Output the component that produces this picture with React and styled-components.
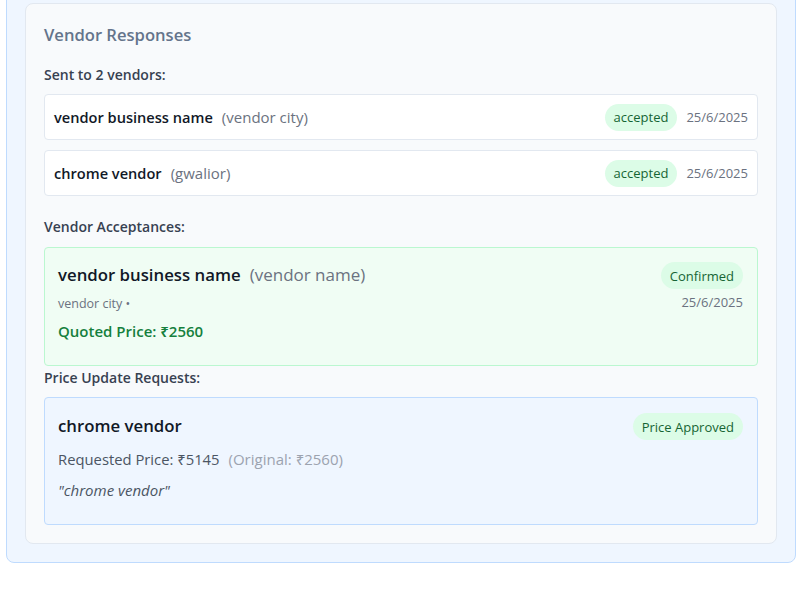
import React from "react";
import styled, { createGlobalStyle } from "styled-components";

const Global = createGlobalStyle`
  html, body { margin: 0; padding: 0; background: #ffffff; }
  body { font-family: "Open Sans", "Noto Sans", sans-serif; overflow: hidden; }
  * { box-sizing: border-box; }
`;

const Page = styled.div`
  padding: 0 12px 0 6px;
`;

const Outer = styled.div`
  margin-top: -16px;
  background: #eff6ff;
  border: 1px solid #bfdbfe;
  border-radius: 8px;
  padding: 18px;
`;

const Card = styled.section`
  background: #f8fafc;
  border: 1px solid #e2e8f0;
  border-radius: 8px;
  padding: 17px 18px 18px 18px;
`;

const Title = styled.h3`
  margin: 0 0 16px 0;
  font-size: 16.6px;
  font-weight: 600;
  color: #64748b;
  line-height: 28px;
`;

const Label = styled.div`
  font-size: 14px;
  font-weight: 600;
  color: #374151;
  line-height: 20px;
  margin: ${(p) => p.$m || "0 0 9px 0"};
`;

const List = styled.div`
  display: flex;
  flex-direction: column;
  gap: 10px;
  margin-bottom: 21px;
`;

const Row = styled.div`
  display: flex;
  align-items: center;
  justify-content: space-between;
  background: #ffffff;
  border: 1px solid #e2e8f0;
  border-radius: 4px;
  height: 46px;
  padding: 0 9px;
`;

const NameGroup = styled.div`
  display: flex;
  align-items: baseline;
  gap: 9px;
`;

const Name = styled.span`
  font-size: ${(p) => p.$size || 14.6}px;
  font-weight: 600;
  color: #111827;
`;

const Sub = styled.span`
  font-size: ${(p) => p.$size || 15}px;
  color: #6b7280;
`;

const Meta = styled.div`
  display: flex;
  align-items: center;
  gap: 9px;
`;

const Badge = styled.span`
  display: inline-flex;
  align-items: center;
  height: 27px;
  padding: 0 9px;
  border-radius: 14px;
  background: #dcfce7;
  color: #166534;
  font-size: 13px;
`;

const DateText = styled.span`
  font-size: 13px;
  color: #6b7280;
`;

const Panel = styled.div`
  border-radius: 4px;
  border: 1px solid ${(p) => p.$border};
  background: ${(p) => p.$bg};
  padding: ${(p) => p.$pt}px 14px ${(p) => p.$pb}px 13px;
`;

const PanelHead = styled.div`
  display: flex;
  justify-content: space-between;
  align-items: flex-start;
`;

const PanelLeft = styled.div`
  display: flex;
  flex-direction: column;
`;

const PanelRight = styled.div`
  display: flex;
  flex-direction: column;
  align-items: flex-end;
  gap: 4px;
`;

const HeadLine = styled.div`
  display: flex;
  align-items: baseline;
  gap: 9px;
  line-height: 26px;
`;

const SmallGray = styled.div`
  font-size: 12.5px;
  color: #6b7280;
  margin-top: 6px;
  line-height: 20px;
`;

const Quoted = styled.div`
  font-size: 15px;
  font-weight: 600;
  color: #15803d;
  margin-top: 6px;
  line-height: 22px;
`;

const PriceLine = styled.div`
  display: flex;
  align-items: baseline;
  gap: 9px;
  margin-top: 9px;
  line-height: 22px;
`;

const Requested = styled.span`
  font-size: 14.8px;
  color: #4b5563;
`;

const Original = styled.span`
  font-size: 15px;
  color: #9ca3af;
`;

const Quote = styled.div`
  font-size: 15px;
  font-style: italic;
  color: #4b5563;
  margin-top: 9px;
  line-height: 22px;
`;

const vendors = [
  { name: "vendor business name", city: "vendor city", status: "accepted", date: "25/6/2025" },
  { name: "chrome vendor", city: "gwalior", status: "accepted", date: "25/6/2025" },
];

export default function App() {
  return (
    <>
      <Global />
      <Page>
        <Outer>
          <Card>
            <Title>Vendor Responses</Title>
            <Label>Sent to 2 vendors:</Label>
            <List>
              {vendors.map((v) => (
                <Row key={v.name}>
                  <NameGroup>
                    <Name>{v.name}</Name>
                    <Sub>({v.city})</Sub>
                  </NameGroup>
                  <Meta>
                    <Badge>{v.status}</Badge>
                    <DateText>{v.date}</DateText>
                  </Meta>
                </Row>
              ))}
            </List>
            <Label $m="0 0 10px 0">Vendor Acceptances:</Label>
            <Panel $bg="#f0fdf4" $border="#bbf7d0" $pt={14} $pb={23}>
              <PanelHead>
                <PanelLeft>
                  <HeadLine>
                    <Name $size={16.8}>vendor business name</Name>
                    <Sub $size={17}>(vendor name)</Sub>
                  </HeadLine>
                  <SmallGray>vendor city •</SmallGray>
                  <Quoted>Quoted Price: ₹2560</Quoted>
                </PanelLeft>
                <PanelRight>
                  <Badge>Confirmed</Badge>
                  <DateText>25/6/2025</DateText>
                </PanelRight>
              </PanelHead>
            </Panel>
            <Label $m="2px 0 9px 0">Price Update Requests:</Label>
            <Panel $bg="#eff6ff" $border="#bfdbfe" $pt={15} $pb={23}>
              <PanelHead>
                <PanelLeft>
                  <HeadLine>
                    <Name $size={16.8}>chrome vendor</Name>
                  </HeadLine>
                  <PriceLine>
                    <Requested>Requested Price: ₹5145</Requested>
                    <Original>(Original: ₹2560)</Original>
                  </PriceLine>
                  <Quote>"chrome vendor"</Quote>
                </PanelLeft>
                <PanelRight>
                  <Badge>Price Approved</Badge>
                </PanelRight>
              </PanelHead>
            </Panel>
          </Card>
        </Outer>
      </Page>
    </>
  );
}
